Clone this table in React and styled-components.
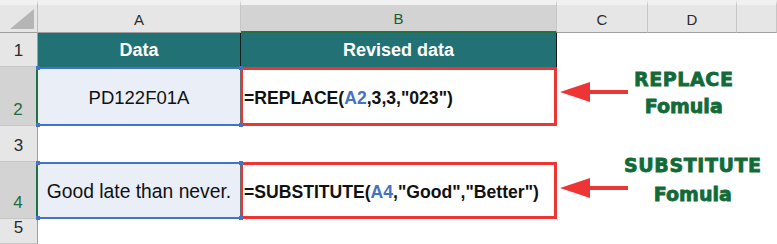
import React from "react";
import styled, { createGlobalStyle } from "styled-components";

// sheet palette
const TEAL = "#217175";
const RED = "#ee3535";
const REF_BLUE = "#4472c4";
const SEL_GREEN = "#217346";
const LABEL_GREEN = "#116a37";

const GlobalStyle = createGlobalStyle`
  html, body {
    margin: 0;
    padding: 0;
    background: #ffffff;
  }
  body {
    font-family: "Liberation Sans", Arial, sans-serif;
    width: 777px;
    height: 244px;
    overflow: hidden;
  }
`;

const Sheet = styled.div`
  display: grid;
  grid-template-columns: 38px 203px 316px 91px 89px 1fr;
  grid-template-rows: 33px 34px 59px 36px 57px 25px;
  width: 777px;
  height: 244px;
  background: #ffffff;
`;

const Corner = styled.div`
  position: relative;
  background: #e6e6e6;
  border-right: 1px solid #bdbdbd;
  border-bottom: 1px solid #9f9f9f;
  border-top: 5px solid #f1f1f1;
  box-sizing: border-box;
  overflow: hidden;

  &::after {
    content: "";
    position: absolute;
    right: 3px;
    bottom: 3px;
    border-left: 24px solid transparent;
    border-bottom: 20px solid #b5b5b5;
  }
`;

const ColHead = styled.div`
  display: flex;
  align-items: center;
  justify-content: center;
  box-sizing: border-box;
  border-top: 5px solid #f1f1f1;
  border-right: 1px solid #c6c6c6;
  border-bottom: ${(p) => (p.$active ? `2px solid ${SEL_GREEN}` : "1px solid #9f9f9f")};
  background: ${(p) => (p.$active ? "#d3d3d3" : "#e6e6e6")};
  color: ${(p) => (p.$active ? "#1e5a35" : "#2b2b2b")};
  font-size: 15px;
  padding-top: 1px;
`;

const RowHead = styled.div`
  display: flex;
  align-items: flex-end;
  justify-content: center;
  box-sizing: border-box;
  padding-bottom: 5px;
  background: ${(p) => (p.$active ? "#d3d3d3" : "#e6e6e6")};
  color: ${(p) => (p.$active ? "#1f6b3c" : "#2b2b2b")};
  border-right: ${(p) => (p.$active ? `2px solid ${SEL_GREEN}` : "1px solid #9f9f9f")};
  border-bottom: 1px solid #c6c6c6;
  font-size: 17px;
`;

const HeaderCell = styled.div`
  display: flex;
  align-items: center;
  justify-content: center;
  box-sizing: border-box;
  background: ${TEAL};
  color: #ffffff;
  font-weight: 700;
  font-size: 18px;
  border-right: 1px solid #1b1b1b;
`;

const DataCell = styled.div`
  position: relative;
  display: flex;
  align-items: center;
  justify-content: center;
  box-sizing: border-box;
  background: #e9eef7;
  border-top: 2px solid ${REF_BLUE};
  border-bottom: 2px solid ${REF_BLUE};
  border-right: 1px solid #6b6b6b;
  color: #111111;
  font-size: ${(p) => p.$size}px;
  padding-top: 3px;
  white-space: nowrap;
`;

const Handle = styled.span`
  position: absolute;
  width: 4px;
  height: 4px;
  background: ${REF_BLUE};
  ${(p) => (p.$top ? "top: -3px;" : "bottom: -3px;")}
  ${(p) => (p.$left ? "left: -2px;" : "right: -3px;")}
`;

const FormulaCell = styled.div`
  display: flex;
  align-items: center;
  box-sizing: border-box;
  border: 3px solid ${RED};
  margin-left: -1px;
  padding-left: 1px;
  padding-top: 3px;
  font-weight: 700;
  font-size: 17.6px;
  color: #111111;
  white-space: nowrap;
`;

const Ref = styled.span`
  color: ${REF_BLUE};
`;

const Callout = styled.div`
  grid-column: 4 / 7;
  display: flex;
  align-items: flex-start;
  padding-left: 3px;
`;

const Arrow = styled.svg`
  flex: none;
  margin-top: ${(p) => p.$top}px;
`;

const Label = styled.div`
  display: flex;
  flex-direction: column;
  align-items: center;
  margin-top: ${(p) => p.$top}px;
  margin-left: ${(p) => p.$left}px;
  font-family: "DejaVu Sans", "Liberation Sans", sans-serif;
  font-weight: 700;
  font-size: 19px;
  line-height: ${(p) => p.$lh}px;
  color: ${LABEL_GREEN};
  -webkit-text-stroke: 0.8px ${LABEL_GREEN};
  white-space: nowrap;
`;

const Caps = styled.span`
  letter-spacing: 0.6px;
`;

const Blank = styled.div``;

const RedArrow = ({ top }) => (
  <Arrow $top={top} width="68" height="20" viewBox="0 0 68 20">
    <polygon points="0,10 30,0 30,8 68,8 68,12 30,12 30,20" fill={RED} />
  </Arrow>
);

const App = () => (
  <>
    <GlobalStyle />
    <Sheet>
      <Corner />
      <ColHead>A</ColHead>
      <ColHead $active>B</ColHead>
      <ColHead>C</ColHead>
      <ColHead>D</ColHead>
      <ColHead />

      <RowHead>1</RowHead>
      <HeaderCell>Data</HeaderCell>
      <HeaderCell>Revised data</HeaderCell>
      <Blank />
      <Blank />
      <Blank />

      <RowHead $active>2</RowHead>
      <DataCell $size={18.5}>
        PD122F01A
        <Handle $top $left />
        <Handle $top />
        <Handle $left />
        <Handle />
      </DataCell>
      <FormulaCell>
        =REPLACE(<Ref>A2</Ref>,3,3,"023")
      </FormulaCell>
      <Callout>
        <RedArrow top={15} />
        <Label $top={-1} $left={6} $lh={27}>
          <Caps>REPLACE</Caps>
          <span>Fomula</span>
        </Label>
      </Callout>

      <RowHead>3</RowHead>
      <Blank />
      <Blank />
      <Blank />
      <Blank />
      <Blank />

      <RowHead $active>4</RowHead>
      <DataCell $size={19.3}>
        Good late than never.
        <Handle $top $left />
        <Handle $top />
        <Handle $left />
        <Handle />
      </DataCell>
      <FormulaCell>
        =SUBSTITUTE(<Ref>A4</Ref>,"Good","Better")
      </FormulaCell>
      <Callout>
        <RedArrow top={16} />
        <Label $top={-11} $left={-4} $lh={29}>
          <Caps>SUBSTITUTE</Caps>
          <span>Fomula</span>
        </Label>
      </Callout>

      <RowHead>5</RowHead>
      <Blank />
      <Blank />
      <Blank />
      <Blank />
      <Blank />
    </Sheet>
  </>
);

export default App;
